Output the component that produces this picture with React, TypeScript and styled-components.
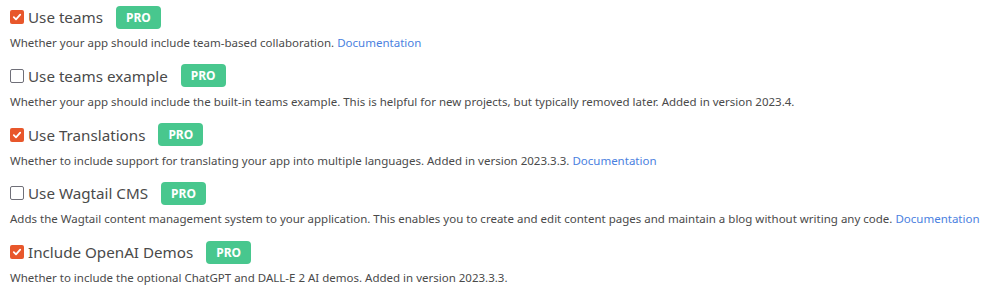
import { createGlobalStyle, styled } from "styled-components";

const GlobalStyle = createGlobalStyle`
  body {
    margin: 0;
    background: #ffffff;
    font-family: "Noto Sans", "Open Sans", sans-serif;
    color: #4a4a4a;
  }
`;

const Form = styled.div`
  padding: 5px 10px 0 10px;
  display: flex;
  flex-direction: column;
  gap: 11.75px;
`;

const Field = styled.div`
  display: flex;
  flex-direction: column;
  gap: 5px;
`;

const Label = styled.label`
  display: flex;
  align-items: center;
  height: 24px;
  font-size: 15.2px;
  color: #4a4a4a;
`;

const Box = styled.span<{ $checked: boolean }>`
  width: 14px;
  height: 14px;
  box-sizing: border-box;
  border-radius: 2px;
  margin-right: 4px;
  display: inline-flex;
  align-items: center;
  justify-content: center;
  background: ${(p) => (p.$checked ? "#e8572b" : "#ffffff")};
  border: ${(p) => (p.$checked ? "none" : "1.5px solid #6f6f78")};
`;

const Tag = styled.span`
  margin-left: 13px;
  height: 23px;
  padding: 0 10px;
  border-radius: 4px;
  background: #48c78e;
  color: #ffffff;
  font-size: 12px;
  font-weight: 700;
  display: inline-flex;
  align-items: center;
`;

const Help = styled.p`
  margin: 0;
  font-size: 11.5px;
  line-height: 18px;
  color: #4a4a4a;
  white-space: nowrap;

  a {
    color: #4a7fe0;
    text-decoration: none;
  }
`;

const Check = () => (
  <svg width="10" height="10" viewBox="0 0 10 10">
    <path d="M1.8 5.2 L4 7.3 L8.2 2.6" fill="none" stroke="#fff" strokeWidth="1.8" strokeLinecap="round" strokeLinejoin="round" />
  </svg>
);

const options = [
  {
    label: "Use teams",
    checked: true,
    help: "Whether your app should include team-based collaboration.",
    docs: true,
  },
  {
    label: "Use teams example",
    checked: false,
    help: "Whether your app should include the built-in teams example. This is helpful for new projects, but typically removed later. Added in version 2023.4.",
    docs: false,
  },
  {
    label: "Use Translations",
    checked: true,
    help: "Whether to include support for translating your app into multiple languages. Added in version 2023.3.3.",
    docs: true,
  },
  {
    label: "Use Wagtail CMS",
    checked: false,
    help: "Adds the Wagtail content management system to your application. This enables you to create and edit content pages and maintain a blog without writing any code.",
    docs: true,
  },
  {
    label: "Include OpenAI Demos",
    checked: true,
    help: "Whether to include the optional ChatGPT and DALL-E 2 AI demos. Added in version 2023.3.3.",
    docs: false,
  },
];

export default function App() {
  return (
    <>
      <GlobalStyle />
      <Form>
        {options.map((o) => (
          <Field key={o.label}>
            <Label>
              <Box $checked={o.checked}>{o.checked && <Check />}</Box>
              {o.label}
              <Tag>PRO</Tag>
            </Label>
            <Help>
              {o.help}
              {o.docs && (
                <>
                  {" "}
                  <a href="#">Documentation</a>
                </>
              )}
            </Help>
          </Field>
        ))}
      </Form>
    </>
  );
}
